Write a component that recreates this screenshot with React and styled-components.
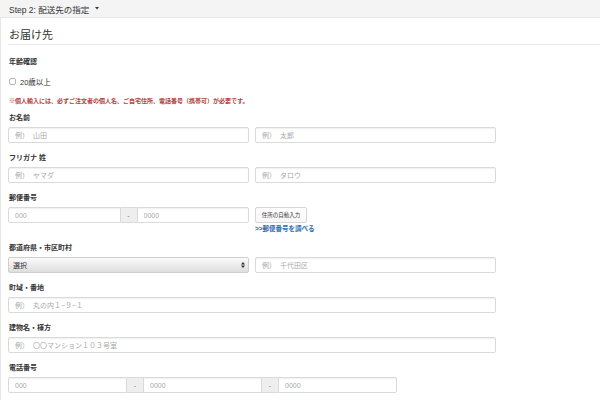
import React from "react";
import styled, { createGlobalStyle } from "styled-components";

const Global = createGlobalStyle`
  html, body { margin: 0; padding: 0; background: #fff; }
  body {
    font-family: "Liberation Sans", "Noto Sans CJK JP", sans-serif;
    color: #333;
    width: 600px;
    height: 400px;
    overflow: hidden;
    -webkit-font-smoothing: antialiased;
  }
  * { box-sizing: border-box; }
`;

const TopBar = styled.div`
  height: 18px;
  background: #f4f4f4;
  border-bottom: 1px solid #e6e6e6;
  display: flex;
  align-items: center;
  gap: 4px;
  padding-left: 9px;
  font-size: 8.5px;
  color: #333;
`;

const Caret = styled.svg`
  width: 4px;
  height: 2.5px;
  margin-left: 2px;
`;

const Panel = styled.div`
  border-left: 1px solid #e6e6e6;
  padding-left: 7px;
  min-height: 382px;
`;

const Title = styled.h2`
  margin: 0;
  padding: 10px 0 2px 1px;
  font-size: 11px;
  line-height: 14px;
  font-weight: normal;
  color: #333;
  border-bottom: 1px solid #e8e8e8;
`;

const Form = styled.div`
  width: 488px;
  padding-top: 12px;
`;

const Label = styled.div`
  font-size: 7px;
  line-height: 10px;
  font-weight: bold;
  color: #333;
  margin-bottom: ${(p) => p.$mb ?? 4}px;
  padding-left: 1px;
`;

const CheckRow = styled.label`
  display: flex;
  align-items: center;
  gap: 4px;
  margin-top: 9px;
  height: 10px;
  padding-left: 1px;
  font-size: 7.5px;
  color: #333;
`;

const Check = styled.input`
  appearance: none;
  margin: 0;
  width: 7px;
  height: 7px;
  border: 1px solid #b5b5b5;
  border-radius: 2px;
  background: #fff;
`;

const Notice = styled.p`
  margin: 10px 0 7px;
  padding-left: 1px;
  font-size: 6px;
  line-height: 10px;
  font-weight: bold;
  color: #b0413e;
`;

const Group = styled.div`
  margin-bottom: 10px;
`;

const Two = styled.div`
  display: grid;
  grid-template-columns: 241px 241px;
  column-gap: 6px;
  align-items: start;
`;

const Input = styled.input`
  display: block;
  width: 100%;
  min-width: 0;
  height: 16px;
  margin: 0;
  padding: 0 6px;
  border: 1px solid #dadada;
  border-radius: ${(p) => p.$radius ?? "2px"};
  box-shadow: inset 0 1px 1px rgba(0, 0, 0, 0.06);
  background: #fff;
  font-family: inherit;
  font-size: 7px;
  color: #333;
  outline: none;
  &::placeholder { color: #a8a8a8; opacity: 1; }
`;

const InputGroup = styled.div`
  display: flex;
  width: ${(p) => p.$w}px;
  & > input { flex: 1; }
`;

const Addon = styled.span`
  flex: 0 0 16px;
  height: 16px;
  display: flex;
  align-items: center;
  justify-content: center;
  background: #eee;
  border-top: 1px solid #dadada;
  border-bottom: 1px solid #dadada;
  font-size: 7px;
  color: #777;
`;

const Stack = styled.div`
  display: flex;
  flex-direction: column;
  align-items: flex-start;
`;

const SmallButton = styled.button`
  height: 16px;
  width: 52px;
  margin: 0;
  padding: 0;
  border: 1px solid #d6d6d6;
  border-radius: 2px;
  background: linear-gradient(#fff, #f7f7f7);
  font-family: inherit;
  font-size: 5.5px;
  color: #333;
`;

const Link = styled.a`
  margin-top: 2px;
  font-size: 6.5px;
  line-height: 8px;
  font-weight: bold;
  color: #2b6cb3;
  text-decoration: none;
`;

const SelectWrap = styled.div`
  position: relative;
  height: 16px;
`;

const Select = styled.select`
  appearance: none;
  display: block;
  width: 100%;
  height: 16px;
  margin: 0;
  padding: 0 4px;
  border: 1px solid #cfcfcf;
  border-radius: 2px;
  background: linear-gradient(#fafafa, #dedede);
  font-family: inherit;
  font-size: 7px;
  color: #333;
  outline: none;
`;

const SelectArrow = styled.svg`
  position: absolute;
  right: 4px;
  top: 5px;
  width: 4px;
  height: 6px;
  pointer-events: none;
`;

const Wide = styled.div`
  width: 488px;
`;

export default function App() {
  return (
    <>
      <Global />
      <TopBar>
        <span>Step 2: 配送先の指定</span>
        <Caret viewBox="0 0 4 2.5">
          <path d="M0 0h4L2 2.5z" fill="#333" />
        </Caret>
      </TopBar>
      <Panel>
        <Title>お届け先</Title>
        <Form>
          <Label $mb={0}>年齢確認</Label>
          <CheckRow>
            <Check type="checkbox" />
            <span>20歳以上</span>
          </CheckRow>
          <Notice>※個人輸入には、必ずご注文者の個人名、ご自宅住所、電話番号（携帯可）が必要です。</Notice>

          <Group>
            <Label>お名前</Label>
            <Two>
              <Input placeholder="例）  山田" />
              <Input placeholder="例）  太郎" />
            </Two>
          </Group>

          <Group>
            <Label>フリガナ 姓</Label>
            <Two>
              <Input placeholder="例）  ヤマダ" />
              <Input placeholder="例）  タロウ" />
            </Two>
          </Group>

          <Group>
            <Label>郵便番号</Label>
            <Two>
              <InputGroup $w={241}>
                <Input $radius="2px 0 0 2px" placeholder="000" />
                <Addon>-</Addon>
                <Input $radius="0 2px 2px 0" placeholder="0000" />
              </InputGroup>
              <Stack>
                <SmallButton type="button">住所の自動入力</SmallButton>
                <Link href="#">&gt;&gt;郵便番号を調べる</Link>
              </Stack>
            </Two>
          </Group>

          <Group>
            <Label>都道府県・市区町村</Label>
            <Two>
              <SelectWrap>
                <Select defaultValue="">
                  <option value="">選択</option>
                </Select>
                <SelectArrow viewBox="0 0 4 6">
                  <path d="M0 2.4L2 0l2 2.4zM0 3.6L2 6l2-2.4z" fill="#333" />
                </SelectArrow>
              </SelectWrap>
              <Input placeholder="例）  千代田区" />
            </Two>
          </Group>

          <Group>
            <Label>町域・番地</Label>
            <Wide>
              <Input placeholder="例）  丸の内１−９−１" />
            </Wide>
          </Group>

          <Group>
            <Label>建物名・様方</Label>
            <Wide>
              <Input placeholder="例）  〇〇マンション１０３号室" />
            </Wide>
          </Group>

          <Group>
            <Label>電話番号</Label>
            <InputGroup $w={389}>
              <Input $radius="2px 0 0 2px" placeholder="000" />
              <Addon>-</Addon>
              <Input $radius="0" placeholder="0000" />
              <Addon>-</Addon>
              <Input $radius="0 2px 2px 0" placeholder="0000" />
            </InputGroup>
          </Group>
        </Form>
      </Panel>
    </>
  );
}
